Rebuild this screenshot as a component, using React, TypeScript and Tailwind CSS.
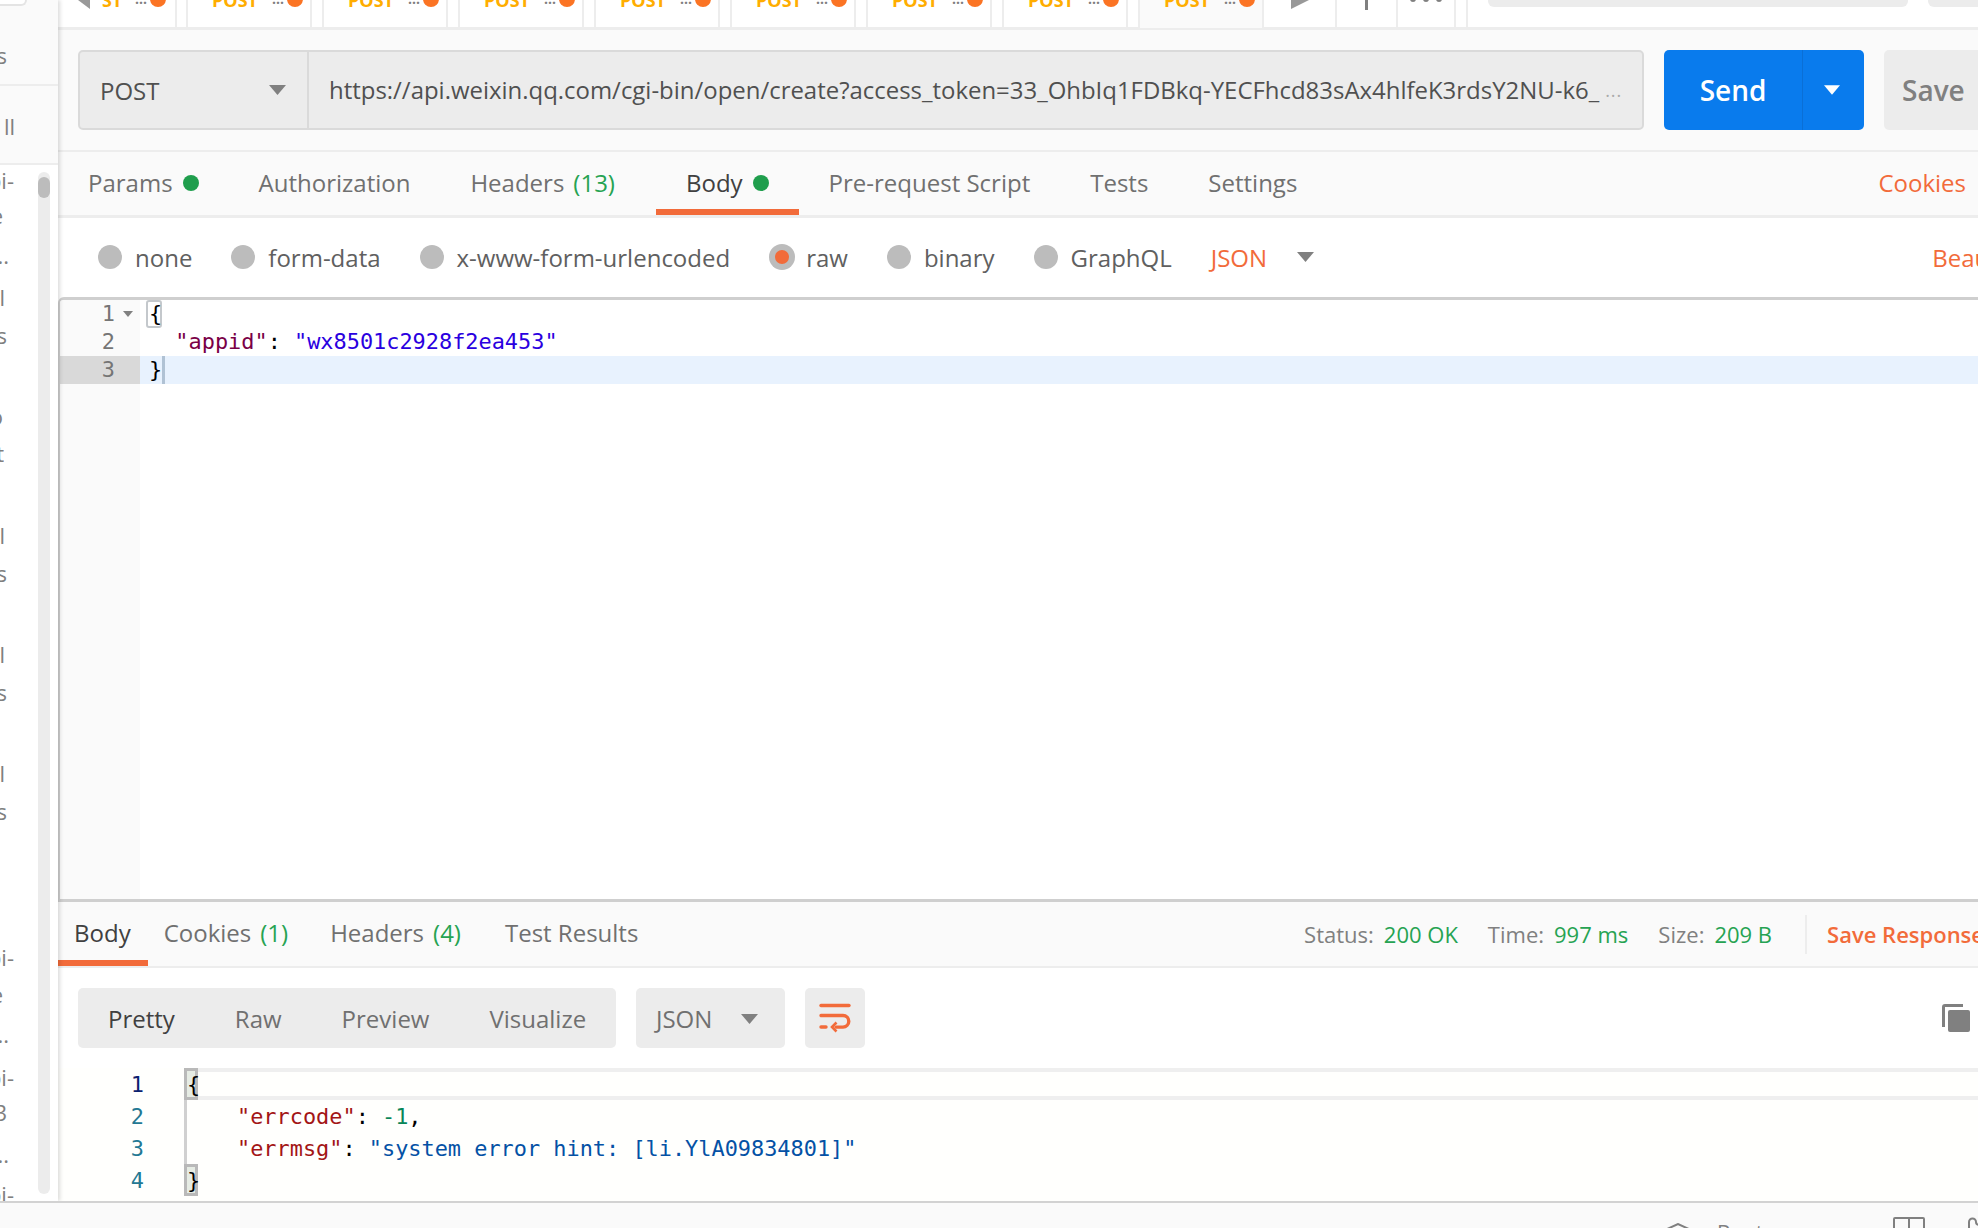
const ORANGE = "text-[#f26b3a]";
const GREEN = "text-[#26a352]";

function Caret({ className }: { className: string }) {
  return (
    <svg viewBox="0 0 17 10" className={className}>
      <polygon points="0,0 17,0 8.5,10" fill="currentColor" />
    </svg>
  );
}

const sideTop = [
  { text: "requests", box: "h-[38px] w-[7px]" },
];

// tails of the collection names, the sidebar is dragged nearly shut
const sideRows = [
  { text: "wx-api-", box: "h-[35px] w-[14px]" },
  { text: "some", box: "h-[40px] w-[3px]" },
  { text: "name...", box: "h-[42px] w-[9px]" },
  { text: "all", box: "h-[38px] w-[5px]" },
  { text: "ends", box: "h-[81px] w-[7px]" },
  { text: "do", box: "h-[37px] w-[3px]" },
  { text: "get", box: "h-[82px] w-[4px]" },
  { text: "all", box: "h-[38px] w-[5px]" },
  { text: "ends", box: "h-[81px] w-[7px]" },
  { text: "all", box: "h-[38px] w-[5px]" },
  { text: "ends", box: "h-[81px] w-[7px]" },
  { text: "all", box: "h-[38px] w-[5px]" },
  { text: "ends", box: "h-[146px] w-[7px]" },
  { text: "wx-api-", box: "h-[37px] w-[14px]" },
  { text: "some", box: "h-[40px] w-[3px]" },
  { text: "name...", box: "h-[43px] w-[9px]" },
  { text: "wx-api-", box: "h-[35px] w-[14px]" },
  { text: "123", box: "h-[42px] w-[7px]" },
  { text: "name...", box: "h-[40px] w-[9px]" },
  { text: "wx-api-", box: "h-[40px] w-[14px]" },
];

function SideText({ text, box }: { text: string; box: string }) {
  return (
    <div className={`flex justify-end overflow-hidden whitespace-nowrap text-[22px] leading-[30px] text-[#808080] ${box}`}>
      <span className="shrink-0">{text}</span>
    </div>
  );
}

function Sidebar() {
  return (
    <aside className="z-10 flex w-[58px] shrink-0 flex-col overflow-hidden bg-white shadow-[2px_0_4px_rgba(0,0,0,0.14)]">
      <div className="h-[86px] shrink-0 border-b-2 border-[#ededed] bg-[#fafafa]">
        <div className="h-[6px] w-[27px] rounded-br-[14px] border-r-2 border-b-2 border-[#e4e4e4] bg-white" />
        <div className="mt-[34px]">
          {sideTop.map((r) => (
            <SideText key={r.text} {...r} />
          ))}
        </div>
      </div>
      <div className="flex h-[79px] shrink-0 items-center border-b-2 border-[#ededed] bg-[#fafafa] pt-[3px]">
        <SideText text="ll" box="h-[30px] w-[15px]" />
      </div>
      <div className="flex min-h-0 flex-1">
        <div className="w-[38px] shrink-0 overflow-hidden pt-0">
          {sideRows.map((r, i) => (
            <SideText key={i} {...r} />
          ))}
        </div>
        <div className="mt-[7px] mb-[6px] h-[1022px] w-[12px] shrink-0 rounded-full bg-[#ececec] pt-[5px]">
          <div className="h-[21px] w-[12px] rounded-full bg-[#bcbcbc]" />
        </div>
      </div>
    </aside>
  );
}

function RequestTab({ label, active }: { label: string; active?: boolean }) {
  return (
    <div
      className={`flex shrink-0 justify-between overflow-hidden ${
        active
          ? "relative z-10 mb-[-3px] h-[30px] w-[126px] border-x-2 border-b-2 border-[#ededed] bg-[#fafafa] pl-[24px] pr-[7px]"
          : "h-[27px] w-[126px] border-x-2 border-[#ededed] pl-[24px] pr-[7px]"
      }`}
    >
      <span className="mt-[-9px] text-[18px] leading-[18px] font-bold text-[#ffad00]">{label}</span>
      <div className="flex">
        <span className="mt-[-10px] mr-[3px] text-[14px] leading-[18px] font-bold text-[#808080]">...</span>
        <div className="mt-[-9px] h-[16px] w-[16px] rounded-full bg-[#fb7424]" />
      </div>
    </div>
  );
}

function TabBar() {
  return (
    <div className="flex h-[30px] shrink-0 border-b-[3px] border-[#ededed] bg-white">
      <div className="flex w-[119px] shrink-0 justify-between overflow-hidden border-r-2 border-[#ededed] pl-[20px] pr-[9px]">
        <svg viewBox="0 0 12 9" className="h-[9px] w-[12px] shrink-0 text-[#999999]">
          <polygon points="0,0 12,0 12,9" fill="currentColor" />
        </svg>
        <span className="mt-[-9px] ml-[12px] text-[18px] leading-[18px] font-bold text-[#ffad00]">ST</span>
        <div className="ml-auto flex">
          <span className="mt-[-10px] mr-[3px] text-[14px] leading-[18px] font-bold text-[#808080]">...</span>
          <div className="mt-[-9px] h-[16px] w-[16px] rounded-full bg-[#fb7424]" />
        </div>
      </div>
      <div className="flex gap-[10px] pl-[9px]">
        {[0, 1, 2, 3, 4, 5, 6].map((i) => (
          <RequestTab key={i} label="POST" />
        ))}
      </div>
      <div className="ml-[10px] flex">
        <RequestTab label="POST" active />
        <div className="flex h-[27px] w-[73px] shrink-0 justify-center border-r-2 border-[#ededed]">
          <svg viewBox="0 0 18 9" className="h-[9px] w-[18px] text-[#999999]">
            <polygon points="0,9 18,0 7,0 0,0" fill="currentColor" />
          </svg>
        </div>
        <div className="flex h-[27px] w-[61px] shrink-0 justify-center border-r-2 border-[#ededed]">
          <div className="h-[10px] w-[3px] bg-[#808080]" />
        </div>
        <div className="flex h-[27px] w-[58px] shrink-0 justify-center gap-[7px] border-r-2 border-[#ededed]">
          <div className="mt-[-4px] h-[6px] w-[6px] rounded-full bg-[#808080]" />
          <div className="mt-[-4px] h-[6px] w-[6px] rounded-full bg-[#808080]" />
          <div className="mt-[-4px] h-[6px] w-[6px] rounded-full bg-[#808080]" />
        </div>
      </div>
      <div className="ml-[10px] flex h-[27px] flex-1 gap-[20px] border-l-2 border-[#ededed] pl-[20px]">
        <div className="h-[7px] w-[420px] shrink-0 rounded-b-[6px] bg-[#ececec]" />
        <div className="h-[7px] flex-1 rounded-bl-[6px] bg-[#ececec]" />
      </div>
    </div>
  );
}

function UrlBar() {
  return (
    <div className="flex h-[122px] shrink-0 overflow-hidden border-b-2 border-[#ededed] bg-[#fafafa] pt-[20px] pl-[20px]">
      <div className="flex h-[80px] w-[1566px] shrink-0 rounded-[5px] border-2 border-[#dadada] bg-[#ececec]">
        <div className="flex w-[229px] shrink-0 items-center justify-between border-r-2 border-[#dadada] pr-[21px] pl-[20px]">
          <span className="pt-[2px] text-[24px] font-medium text-[#505050]">POST</span>
          <Caret className="h-[10px] w-[17px] text-[#808080]" />
        </div>
        <div className="flex min-w-0 flex-1 items-center pl-[20px]">
          <span className="pb-[1px] text-[23.95px] whitespace-nowrap text-[#505050]">
            https://api.weixin.qq.com/cgi-bin/open/create?access_token=33_OhbIq1FDBkq-YECFhcd83sAx4hlfeK3rdsY2NU-k6_
          </span>
          <span className="ml-[6px] text-[18px] tracking-[1px] text-[#aaaaaa]">...</span>
        </div>
      </div>
      <div className="ml-[20px] flex h-[80px] w-[200px] shrink-0 rounded-[5px] bg-[#097bed]">
        <div className="flex w-[139px] items-center justify-center border-r border-[#0a6fd6] text-[28px] font-semibold text-white">Send</div>
        <div className="flex flex-1 items-center justify-center pr-[4px]">
          <Caret className="h-[10px] w-[16px] text-white" />
        </div>
      </div>
      <div className="ml-[20px] flex h-[80px] w-[120px] shrink-0 items-center rounded-l-[5px] bg-[#ececec] pl-[18px] text-[28px] font-semibold text-[#808080]">
        Save
      </div>
    </div>
  );
}

function Dot() {
  return <span className="ml-[10px] h-[16px] w-[16px] rounded-full bg-[#1f9e4d]" />;
}

function RequestTabs() {
  return (
    <div className="flex h-[66px] shrink-0 border-b-[3px] border-[#ededed] bg-[#fafafa] text-[24px] text-[#707070]">
      <div className="flex h-[63px] items-center px-[30px] pb-[2px]">
        Params
        <Dot />
      </div>
      <div className="flex h-[63px] items-center px-[30px] pb-[2px]">Authorization</div>
      <div className="flex h-[63px] items-center pr-[41px] pb-[2px] pl-[30px]">
        Headers<span className={`ml-[9px] ${GREEN}`}>(13)</span>
      </div>
      <div className="flex h-[63px] items-center border-b-[6px] border-[#f26b3a] px-[30px] pt-[4px] text-[#404040]">
        Body
        <Dot />
      </div>
      <div className="flex h-[63px] items-center px-[30px] pb-[2px]">Pre-request Script</div>
      <div className="flex h-[63px] items-center px-[30px] pb-[2px]">Tests</div>
      <div className="flex h-[63px] items-center px-[30px] pb-[2px]">Settings</div>
      <div className={`ml-auto flex h-[63px] items-center pr-[12px] pb-[2px] ${ORANGE}`}>Cookies</div>
    </div>
  );
}

function Radio({ label, on }: { label: string; on?: boolean }) {
  return (
    <div className={`flex items-center ${on ? "gap-[11px]" : "gap-[13px]"}`}>
      <span className={`flex items-center justify-center rounded-full bg-[#bcbcbc] ${on ? "h-[26px] w-[26px]" : "h-[24px] w-[24px]"}`}>
        {on && <span className="h-[14px] w-[14px] rounded-full bg-[#f26b3a]" />}
      </span>
      <span className="pt-[3px] text-[24px] text-[#606060]">{label}</span>
    </div>
  );
}

function BodyTypes() {
  return (
    <div className="flex h-[79px] shrink-0 items-center gap-[39px] overflow-hidden bg-white pb-[2px] pl-[40px]">
      <Radio label="none" />
      <Radio label="form-data" />
      <Radio label="x-www-form-urlencoded" />
      <Radio label="raw" on />
      <Radio label="binary" />
      <Radio label="GraphQL" />
      <div className={`flex items-center pt-[3px] text-[24px] ${ORANGE}`}>
        JSON
        <Caret className="mb-[3px] ml-[30px] h-[10px] w-[17px] text-[#808080]" />
      </div>
      <div className={`mr-[-46px] ml-auto shrink-0 pt-[3px] text-[24px] ${ORANGE}`}>Beautify</div>
    </div>
  );
}

const MONO = "font-['DejaVu_Sans_Mono',monospace] text-[21.9px]";

function Editor() {
  return (
    <div className={`flex min-h-0 flex-1 overflow-hidden rounded-tl-[6px] border-t-[3px] border-b-[3px] border-l-2 border-[#cfcfcf] bg-white leading-[28px] ${MONO}`}>
      <div className="w-[80px] shrink-0 bg-[#fafafa] text-[#757575]">
        <div className="flex h-[28px] items-center justify-end">
          <span>1</span>
          <Caret className="mr-[7px] ml-[8px] h-[6px] w-[10px] text-[#808080]" />
        </div>
        <div className="h-[28px] pr-[25px] text-right">2</div>
        <div className="h-[28px] bg-[#d9d9d9] pr-[25px] text-right">3</div>
      </div>
      <div className="min-w-0 flex-1 text-black">
        <div className="h-[28px] pl-[6px]">
          <span className="inline-block h-[28px] w-[16px] rounded-[3px] border-2 border-[#c4c8cc] pl-[1px] leading-[24px]">{"{"}</span>
        </div>
        <div className="h-[28px] pl-[9px] whitespace-pre">
          {"  "}
          <span className="text-[#7a0046]">"appid"</span>: <span className="text-[#2a00e0]">"wx8501c2928f2ea453"</span>
        </div>
        <div className="flex h-[28px] bg-[#e8f2fe] pl-[9px]">
          <span className="w-[13px]">{"}"}</span>
          <span className="h-[28px] w-[3px] bg-[#b0c2d4]" />
        </div>
      </div>
    </div>
  );
}

function ResponseTabs() {
  return (
    <div className="flex h-[66px] shrink-0 items-start border-b-2 border-[#ededed] bg-[#fafafa] text-[24px] text-[#707070]">
      <div className="flex h-[64px] items-center border-b-[6px] border-[#f26b3a] pt-[4px] pr-[17px] pl-[16px] text-[#404040]">Body</div>
      <div className="flex h-[64px] items-center pr-[21px] pb-[2px] pl-[16px]">
        Cookies<span className={`ml-[9px] ${GREEN}`}>(1)</span>
      </div>
      <div className="flex h-[64px] items-center pr-[23px] pb-[2px] pl-[21px]">
        Headers<span className={`ml-[9px] ${GREEN}`}>(4)</span>
      </div>
      <div className="flex h-[64px] items-center px-[21px] pb-[2px]">Test Results</div>
      <div className="ml-auto flex h-[64px] shrink-0 items-center text-[22px] whitespace-nowrap text-[#808080]">
        <span>Status:</span>
        <span className={`ml-[10px] ${GREEN}`}>200 OK</span>
        <span className="ml-[30px]">Time:</span>
        <span className={`ml-[10px] ${GREEN}`}>997 ms</span>
        <span className="ml-[30px]">Size:</span>
        <span className={`ml-[10px] ${GREEN}`}>209 B</span>
        <span className="mr-[20px] ml-[33px] h-[39px] w-[2px] bg-[#ededed]" />
        <span className={`mr-[-6px] font-semibold ${ORANGE}`}>Save Response</span>
      </div>
    </div>
  );
}

function ResponseBar() {
  return (
    <div className="flex h-[100px] shrink-0 items-center bg-white pl-[20px] text-[24px] text-[#707070]">
      <div className="flex h-[60px] w-[538px] items-center rounded-[5px] bg-[#ececec] pt-[2px]">
        <span className="px-[30px] text-[#404040]">Pretty</span>
        <span className="px-[30px]">Raw</span>
        <span className="px-[30px]">Preview</span>
        <span className="px-[30px]">Visualize</span>
      </div>
      <div className="ml-[20px] flex h-[60px] w-[149px] items-center rounded-[5px] bg-[#ececec] pt-[2px] pl-[20px]">
        JSON
        <Caret className="ml-[29px] h-[10px] w-[17px] text-[#808080]" />
      </div>
      <div className="ml-[20px] flex h-[60px] w-[60px] items-center justify-center rounded-[5px] bg-[#ececec]">
        <svg viewBox="0 0 32 30" className="h-[30px] w-[32px]" fill="none" stroke="#f26b3a" strokeWidth="3.4" strokeLinecap="round">
          <path d="M2 2.5h28" />
          <path d="M2 12.5h22a5.8 5.8 0 0 1 0 11.6h-7" />
          <path d="M2 24h5" />
          <path d="M17.5 19.5 13 24l4.5 4.5" strokeWidth="2.6" strokeLinecap="butt" />
        </svg>
      </div>
      <svg viewBox="0 0 28 28" className="mr-[8px] ml-auto h-[28px] w-[28px] text-[#808080]" fill="currentColor">
        <path d="M3 0h18v3H3v20H0V3a3 3 0 0 1 3-3z" />
        <rect x="6" y="6" width="22" height="22" rx="2" />
      </svg>
    </div>
  );
}

function BraceBox({ ch }: { ch: string }) {
  return <span className="block h-[32px] w-[14px] border-[3px] border-[#b9b9b9] bg-[#e6ece4] leading-[28px]">{ch}</span>;
}

function ResponseCode() {
  return (
    <div className={`flex h-[133px] shrink-0 overflow-hidden bg-[#fffffd] leading-[34px] ${MONO}`}>
      <div className="w-[126px] shrink-0 pr-[40px] text-right text-[#237893]">
        <div className="h-[32px] text-[#0b216f]">1</div>
        <div className="h-[32px]">2</div>
        <div className="h-[32px]">3</div>
        <div className="h-[32px]">4</div>
      </div>
      <div className="h-[128px] min-w-0 flex-1 border-l-[3px] border-[#d0d0d0] text-black">
        <div className="ml-[-3px] flex h-[32px]">
          <BraceBox ch="{" />
          <div className="h-[32px] flex-1 border-y-4 border-[#efefef]" />
        </div>
        <div className="h-[32px] pl-[50px] whitespace-pre">
          <span className="text-[#a31515]">"errcode"</span>: <span className="text-[#098658]">-1</span>,
        </div>
        <div className="h-[32px] pl-[50px] whitespace-pre">
          <span className="text-[#a31515]">"errmsg"</span>: <span className="text-[#0451a5]">"system error hint: [li.YlA09834801]"</span>
        </div>
        <div className="ml-[-3px] h-[32px]">
          <BraceBox ch="}" />
        </div>
      </div>
    </div>
  );
}

function Footer() {
  return (
    <footer className="z-20 flex h-[27px] shrink-0 overflow-hidden border-t-2 border-[#d2d2d2] bg-[#fafafa]">
      <svg viewBox="0 0 28 14" className="mt-[20px] ml-[1664px] h-[14px] w-[28px] shrink-0 text-[#808080]" fill="none" stroke="currentColor" strokeWidth="2">
        <path d="M1 7 14 1l13 6-13 6z" />
      </svg>
      <span className="mt-[16px] ml-[25px] text-[21px] leading-[28px] text-[#808080]">Bootcamp</span>
      <div className="mt-[14px] ml-[76px] flex h-[20px] w-[32px] shrink-0 justify-center rounded-[2px] border-2 border-[#808080]">
        <span className="w-[2px] bg-[#808080]" />
      </div>
      <svg viewBox="0 0 12 12" className="mt-[14px] ml-[43px] h-[12px] w-[12px] shrink-0 text-[#808080]" fill="none" stroke="currentColor" strokeWidth="2">
        <path d="M1 12V5a3.5 3.5 0 0 1 7 0c0 2 2 3 4 3" />
      </svg>
    </footer>
  );
}

export default function App() {
  return (
    <div className="flex h-[1228px] w-[1978px] flex-col overflow-hidden bg-white font-['Open_Sans',sans-serif]">
      <div className="flex min-h-0 flex-1">
        <Sidebar />
        <main className="flex min-w-0 flex-1 flex-col">
          <TabBar />
          <UrlBar />
          <RequestTabs />
          <BodyTypes />
          <Editor />
          <ResponseTabs />
          <ResponseBar />
          <ResponseCode />
        </main>
      </div>
      <Footer />
    </div>
  );
}
